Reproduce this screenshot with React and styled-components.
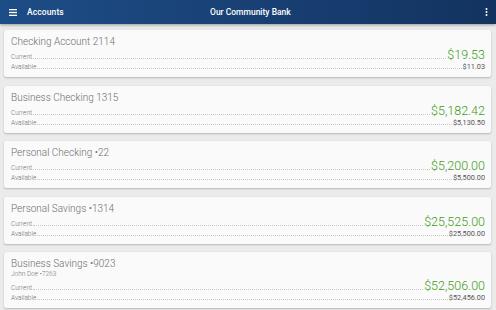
import React from 'react';
import styled, { createGlobalStyle } from 'styled-components';

const GlobalStyle = createGlobalStyle`
	html, body {
		margin: 0;
		padding: 0;
		background: #ebebeb;
		font-family: Roboto, 'Liberation Sans', sans-serif;
	}
`;

const Page = styled.div`
	width: 496px;
	height: 310px;
	overflow: hidden;
	background: #ebebeb;
`;

const AppBar = styled.header`
	position: relative;
	display: flex;
	align-items: center;
	height: 24px;
	padding: 0 7px 0 9px;
	background: linear-gradient(to right, #1d4d86, #183f73 55%, #12335f);
	box-shadow: 0 1px 3px rgba(0, 0, 0, 0.35);
	color: #fff;
	z-index: 1;
`;

const IconButton = styled.div`
	display: flex;
	align-items: center;
	justify-content: center;
	width: ${(p) => p.size}px;
	height: 24px;
`;

const BarTitle = styled.div`
	margin-left: 10px;
	font-size: 8.5px;
	font-weight: 500;
	letter-spacing: 0.1px;
`;

const BankName = styled.div`
	flex: 1;
	text-align: center;
	font-size: 8.5px;
	font-weight: 500;
	margin-right: 46px;
`;

const List = styled.main`
	display: flex;
	flex-direction: column;
	gap: 8.5px;
	padding: 6px 5px 6px 4px;
`;

const Card = styled.section`
	background: #fafafa;
	border-radius: 2px;
	box-shadow: 0 1px 2px rgba(0, 0, 0, 0.22), 0 0 1px rgba(0, 0, 0, 0.08);
	padding: 6px 6px 6px 7px;
`;

const Title = styled.div`
	font-size: 10px;
	line-height: 12px;
	font-weight: 300;
	color: #6f6f6f;
`;

const Owner = styled.div`
	font-size: 6.5px;
	line-height: 9px;
	font-weight: 300;
	color: #777;
`;

const Row = styled.div`
	display: flex;
	align-items: baseline;
	height: ${(p) => (p.main ? 14 : 9)}px;
	line-height: ${(p) => (p.main ? 14 : 9)}px;
`;

const Label = styled.span`
	font-size: 6.5px;
	font-weight: 300;
	color: #707070;
`;

const Leader = styled.span`
	flex: 1;
	margin: 0 1px;
	border-bottom: 1px dotted #c9c9c9;
`;

const Amount = styled.span`
	font-size: ${(p) => (p.main ? 12.5 : 7.3)}px;
	color: ${(p) => (p.main ? '#3f9a18' : '#555')};
	font-weight: ${(p) => (p.main ? 300 : 400)};
`;

const accounts = [
	{ name: 'Checking Account 2114', current: '$19.53', available: '$11.03' },
	{ name: 'Business Checking 1315', current: '$5,182.42', available: '$5,130.50' },
	{ name: 'Personal Checking \u202222', current: '$5,200.00', available: '$5,500.00' },
	{ name: 'Personal Savings \u20221314', current: '$25,525.00', available: '$25,500.00' },
	{
		name: 'Business Savings \u20229023',
		owner: 'John Doe \u20227263',
		current: '$52,506.00',
		available: '$52,456.00',
	},
];

function MenuIcon() {
	return (
		<svg width="8" height="7" viewBox="0 0 8 7">
			<rect x="0" y="0" width="8" height="1.3" fill="#fff" />
			<rect x="0" y="2.85" width="8" height="1.3" fill="#fff" />
			<rect x="0" y="5.7" width="8" height="1.3" fill="#fff" />
		</svg>
	);
}

function MoreIcon() {
	return (
		<svg width="3" height="8" viewBox="0 0 3 8">
			<circle cx="1.5" cy="1" r="1" fill="#fff" />
			<circle cx="1.5" cy="4" r="1" fill="#fff" />
			<circle cx="1.5" cy="7" r="1" fill="#fff" />
		</svg>
	);
}

function AccountCard({ account }) {
	return (
		<Card>
			<Title>{account.name}</Title>
			{account.owner && <Owner>{account.owner}</Owner>}
			<Row main>
				<Label>Current</Label>
				<Leader />
				<Amount main>{account.current}</Amount>
			</Row>
			<Row>
				<Label>Available</Label>
				<Leader />
				<Amount>{account.available}</Amount>
			</Row>
		</Card>
	);
}

export default function App() {
	return (
		<Page>
			<GlobalStyle />
			<AppBar>
				<IconButton size={8}>
					<MenuIcon />
				</IconButton>
				<BarTitle>Accounts</BarTitle>
				<BankName>Our Community Bank</BankName>
				<IconButton size={6}>
					<MoreIcon />
				</IconButton>
			</AppBar>
			<List>
				{accounts.map((a) => (
					<AccountCard key={a.name} account={a} />
				))}
			</List>
		</Page>
	);
}
